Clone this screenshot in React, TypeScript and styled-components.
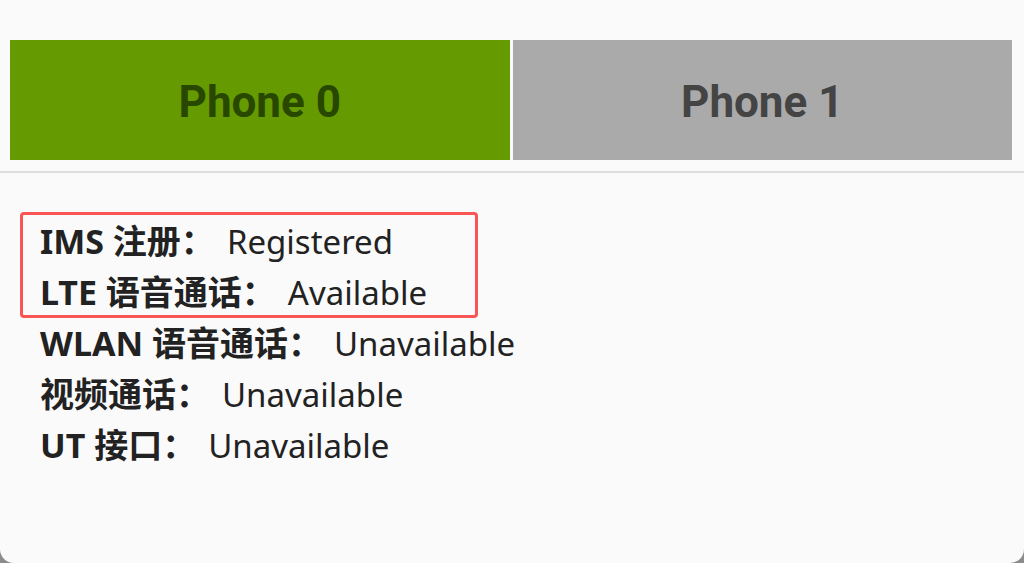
import styled, { createGlobalStyle } from "styled-components";

const GlobalStyle = createGlobalStyle`
  html, body {
    margin: 0;
    padding: 0;
    background: #8c8c8c;
  }
`;

const Screen = styled.div`
  width: 1024px;
  height: 563px;
  background: #fafafa;
  border-radius: 0 0 14px 14px;
  overflow: hidden;
  display: flex;
  flex-direction: column;
`;

const TabBar = styled.div`
  display: flex;
  gap: 3px;
  padding: 40px 12px 0 10px;
  height: 120px;
`;

const Tab = styled.div<{ $active: boolean }>`
  flex: 1;
  display: flex;
  align-items: center;
  justify-content: center;
  padding-top: 3px;
  background: ${({ $active }) => ($active ? "#659a00" : "#aaaaaa")};
  color: ${({ $active }) => ($active ? "#284800" : "#444444")};
  font-family: Roboto, "Noto Sans", sans-serif;
  font-weight: 700;
  font-size: 44px;
`;

const Divider = styled.div`
  margin-top: 11px;
  height: 2px;
  background: #dedede;
`;

const StatusList = styled.div`
  position: relative;
  padding: 43px 0 0 40px;
  font-family: "Noto Sans", "Noto Sans CJK SC", sans-serif;
  font-size: 34px;
  color: #222;
`;

const Row = styled.div`
  height: 51px;
  line-height: 51px;
  white-space: nowrap;
`;

const Label = styled.span`
  font-weight: 700;
`;

const Value = styled.span`
  font-weight: 400;
  font-size: 33px;
  margin-left: 12px;
`;

const Highlight = styled.div`
  position: absolute;
  left: 20px;
  top: 39px;
  width: 452px;
  height: 100px;
  border: 3px solid #fa5555;
  border-radius: 4px;
  pointer-events: none;
`;

const rows = [
  { label: "IMS 注册：", value: "Registered" },
  { label: "LTE 语音通话：", value: "Available" },
  { label: "WLAN 语音通话：", value: "Unavailable" },
  { label: "视频通话：", value: "Unavailable" },
  { label: "UT 接口：", value: "Unavailable" },
];

export default function App() {
  return (
    <>
      <GlobalStyle />
      <Screen>
        <TabBar>
          <Tab $active>Phone 0</Tab>
          <Tab $active={false}>Phone 1</Tab>
        </TabBar>
        <Divider />
        <StatusList>
          {rows.map((r) => (
            <Row key={r.label}>
              <Label>{r.label}</Label>
              <Value>{r.value}</Value>
            </Row>
          ))}
          <Highlight />
        </StatusList>
      </Screen>
    </>
  );
}
